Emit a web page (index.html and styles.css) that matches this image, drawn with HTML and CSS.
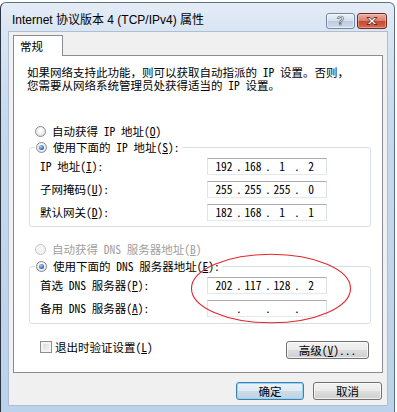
FILE: index.html
```html
<!DOCTYPE html>
<html>
  <head>
    <meta charset="utf-8">
    <title>Internet 协议版本 4 (TCP/IPv4) 属性</title>
    <link rel="stylesheet" href="styles.css">
  </head>
  <body>
    <div class="window">
      <div class="titlebar">
        <span class="title">Internet 协议版本 4 (TCP/IPv4) 属性</span>
        <div class="caption-buttons">
          <span class="cap help">?</span>
          <span class="cap close">
            <svg width="14" height="10" viewBox="0 0 14 10">
              <path d="M2 1.5h3l2 2.2 2-2.2h3l-3.4 3.5 3.4 3.5h-3l-2-2.2-2 2.2h-3l3.4-3.5z" fill="#fff" stroke="#5a1d14" stroke-width="0.9"/>
            </svg>
          </span>
        </div>
      </div>

      <div class="client">
        <div class="tabs">
          <div class="tab">常规</div>
        </div>
        <div class="panel">
          <p class="desc">如果网络支持此功能，则可以获取自动指派的 IP 设置。否则，<br>您需要从网络系统管理员处获得适当的 IP 设置。</p>

          <div class="opt first">
            <span class="radio"></span>
            <span>自动获得 IP 地址(<u>O</u>)</span>
          </div>
          <fieldset class="group">
            <legend class="opt">
              <span class="radio on"></span>
              <span>使用下面的 IP 地址(<u>S</u>):</span>
            </legend>
            <div class="rows">
              <div class="field">
                <label>IP 地址(<u>I</u>):</label>
                <div class="ip"><span class="oct">192</span><span class="dot">.</span><span class="oct">168</span><span class="dot">.</span><span class="oct">1</span><span class="dot">.</span><span class="oct">2</span></div>
              </div>
              <div class="field">
                <label>子网掩码(<u>U</u>):</label>
                <div class="ip"><span class="oct">255</span><span class="dot">.</span><span class="oct">255</span><span class="dot">.</span><span class="oct">255</span><span class="dot">.</span><span class="oct">0</span></div>
              </div>
              <div class="field">
                <label>默认网关(<u>D</u>):</label>
                <div class="ip"><span class="oct">182</span><span class="dot">.</span><span class="oct">168</span><span class="dot">.</span><span class="oct">1</span><span class="dot">.</span><span class="oct">1</span></div>
              </div>
            </div>
          </fieldset>

          <div class="opt dns disabled">
            <span class="radio off"></span>
            <span>自动获得 DNS 服务器地址(<u>B</u>)</span>
          </div>
          <fieldset class="group second">
            <legend class="opt">
              <span class="radio on"></span>
              <span>使用下面的 DNS 服务器地址(<u>E</u>):</span>
            </legend>
            <div class="rows last">
              <div class="field">
                <label>首选 DNS 服务器(<u>P</u>):</label>
                <div class="ip"><span class="oct">202</span><span class="dot">.</span><span class="oct">117</span><span class="dot">.</span><span class="oct">128</span><span class="dot">.</span><span class="oct">2</span></div>
              </div>
              <div class="field">
                <label>备用 DNS 服务器(<u>A</u>):</label>
                <div class="ip"><span class="oct"></span><span class="dot">.</span><span class="oct"></span><span class="dot">.</span><span class="oct"></span><span class="dot">.</span><span class="oct"></span></div>
              </div>
            </div>
          </fieldset>

          <div class="bottom-row">
            <div class="check">
              <span class="box"></span>
              <span>退出时验证设置(<u>L</u>)</span>
            </div>
            <button class="btn advanced">高级(<u>V</u>)...</button>
          </div>
        </div>

        <div class="dialog-buttons">
          <button class="btn default">确定</button>
          <button class="btn">取消</button>
        </div>
      </div>
    </div>

    <svg class="mark" width="164" height="74" viewBox="0 0 164 74">
      <ellipse cx="81" cy="36.5" rx="79.5" ry="34.3" fill="none" stroke="#e3262c" stroke-width="1.1"/>
    </svg>
  </body>
</html>
```

FILE: styles.css
```css
body {
  margin: 0;
  background-color: #ffffff;
  overflow: hidden;
  font-family: "Noto Sans Mono CJK SC", "Liberation Mono", "Noto Sans CJK SC", monospace;
  font-size: 11.5px;
  color: #000000;
}

.window {
  margin-top: 2px;
  width: 395px;
  box-sizing: border-box;
  border: 1px solid #5f6f84;
  border-left-color: #2b3440;
  border-radius: 6px 6px 0 0;
  padding: 0 6px 6px 7px;
  background: linear-gradient(to bottom, #e4ecf6 0, #d9e5f3 30px, #c6d9ee 120px, #bcd2eb 100%);
}

.titlebar {
  height: 28px;
  display: flex;
  justify-content: space-between;
  align-items: flex-start;
  padding: 0 1px 0 4px;
}

.title {
  margin-top: 9px;
  line-height: 16px;
  font-family: "Liberation Sans", "Noto Sans CJK SC", sans-serif;
  font-size: 12px;
  color: #000000;
}

.caption-buttons {
  margin-top: 10px;
  display: flex;
  gap: 2px;
}

.cap {
  height: 16px;
  box-sizing: border-box;
  border-radius: 3px;
  display: flex;
  align-items: center;
  justify-content: center;
}

.help {
  width: 29px;
  border: 1px solid #7485a0;
  background: linear-gradient(to bottom, #edf2f9, #d3deec 48%, #bccbdf 52%, #cfdcec);
  box-shadow: inset 0 0 0 1px rgba(255,255,255,0.55);
  font-family: "Liberation Sans", sans-serif;
  font-weight: bold;
  font-size: 12px;
  color: #ffffff;
  -webkit-text-stroke: 0.7px #5b6a80;
}

.close {
  width: 30px;
  border: 1px solid #6e2a20;
  background: linear-gradient(to bottom, #eab0a2, #d8806c 48%, #c5472f 52%, #d66a4f);
  box-shadow: inset 0 0 0 1px rgba(255,220,210,0.45);
}

.client {
  height: 375px;
  box-sizing: border-box;
  border: 1px solid #aebfd4;
  background-color: #f0f0f0;
  padding: 3px 4px 0 4px;
}

.tabs {
  display: flex;
}

.tab {
  position: relative;
  z-index: 1;
  width: 50px;
  height: 21px;
  box-sizing: border-box;
  border: 1px solid #898c95;
  border-bottom: none;
  background-color: #ffffff;
  padding: 4px 0 0 6px;
  line-height: 13px;
  font-family: "Noto Sans CJK SC", sans-serif;
}

.panel {
  margin-top: -1px;
  height: 318px;
  box-sizing: border-box;
  border: 1px solid #898c95;
  background-color: #ffffff;
  padding: 0 11px 0 13px;
}

.desc {
  margin: 10px 0 0;
  line-height: 13px;
  white-space: nowrap;
}

.opt {
  display: flex;
  align-items: center;
  gap: 6px;
  height: 13px;
  line-height: 13px;
  white-space: nowrap;
}

.opt.first {
  margin-top: 33px;
  padding-left: 8px;
}

.opt.dns {
  margin-top: 16px;
  padding-left: 8px;
}

.disabled {
  color: #a0a0a0;
}

.radio {
  width: 11px;
  height: 11px;
  box-sizing: border-box;
  border-radius: 50%;
  border: 1px solid #8a8a8a;
  background: radial-gradient(circle at 50% 40%, #ffffff 20%, #d4d4d4 100%);
  display: flex;
  align-items: center;
  justify-content: center;
}

.radio.on::after {
  content: "";
  width: 5px;
  height: 5px;
  border-radius: 50%;
  background: radial-gradient(circle at 40% 35%, #9fd8fb 0, #3a78c6 55%, #1b3f86 100%);
}

.radio.off {
  border-color: #c4c4c4;
  background: #f4f4f4;
}

.group {
  margin: 3px 0 0 2px;
  padding: 0;
  border: 1px solid #d5dfe5;
  border-radius: 3px;
  min-inline-size: 0;
}

.group.second {
  margin-top: 4px;
}

.group legend {
  margin-left: 5px;
  padding: 0 2px 0 1px;
  background-color: #ffffff;
}

.rows {
  padding: 4px 0 5px 10px;
  display: flex;
  flex-direction: column;
  gap: 6px;
}

.rows.last {
  padding-bottom: 6px;
}

.field {
  display: flex;
  align-items: center;
  height: 17px;
}

.field label {
  width: 167px;
  line-height: 13px;
  white-space: nowrap;
}

.ip {
  width: 120px;
  height: 17px;
  box-sizing: border-box;
  border: 1px solid;
  border-color: #abadb3 #dbdfe6 #e3e9ef #e2e3ea;
  background-color: #ffffff;
  padding-left: 4px;
  display: flex;
  align-items: center;
  line-height: 13px;
}

.oct {
  width: 24px;
  text-align: center;
}

.dot {
  width: 5px;
  text-align: center;
}

.bottom-row {
  margin-top: 17px;
  display: flex;
  justify-content: space-between;
  align-items: flex-start;
}

.check {
  padding-left: 13px;
  display: flex;
  align-items: center;
  gap: 3px;
  height: 12px;
  line-height: 13px;
}

.box {
  width: 12px;
  height: 12px;
  box-sizing: border-box;
  border: 1px solid #8f8f8f;
  background: linear-gradient(135deg, #d9d9d9, #f5f5f5);
  box-shadow: inset 0 0 0 2px #f4f4f4;
}

.btn {
  height: 18px;
  box-sizing: border-box;
  border: 1px solid #707070;
  border-radius: 3px;
  background: linear-gradient(to bottom, #f2f2f2, #ebebeb 48%, #dddddd 52%, #cfcfcf);
  box-shadow: inset 0 0 0 1px rgba(255,255,255,0.7);
  padding: 0;
  font-family: inherit;
  font-size: 11.5px;
  line-height: 13px;
  color: #000000;
}

.advanced {
  width: 83px;
  margin-right: 2px;
}

.dialog-buttons {
  margin-top: 9px;
  padding-right: 1px;
  display: flex;
  justify-content: flex-end;
  gap: 9px;
}

.dialog-buttons .btn {
  width: 69px;
}

.btn.default {
  width: 68px;
  border-color: #3c7fb1;
  background: linear-gradient(to bottom, #eaf3fa, #dfeaf3 48%, #cadbe8 52%, #bfd3e2);
  box-shadow: inset 0 0 0 1px #9bd3f3;
}

.mark {
  position: absolute;
  left: 190px;
  top: 252px;
}
```
